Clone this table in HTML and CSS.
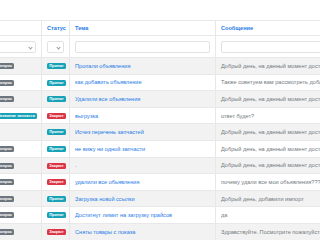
FILE: index.html
```html
<!DOCTYPE html>
<html lang="ru">
<head>
  <meta charset="UTF-8" />
  <title>Обращения</title>
  <link rel="stylesheet" href="styles.css">
</head>
<body>

  <div class="table-wrapper">
    <table class="tickets">
      <colgroup>
        <col class="col-type">
        <col class="col-status">
        <col class="col-subject">
        <col class="col-message">
      </colgroup>
      <thead>
        <tr class="head-row">
          <th></th>
          <th>Статус</th>
          <th>Тема</th>
          <th>Сообщение</th>
        </tr>
        <tr class="filter-row">
          <th><div class="select"></div></th>
          <th><div class="select"></div></th>
          <th><input type="text" /></th>
          <th><input type="text" /></th>
        </tr>
      </thead>
      <tbody>
        <tr>
          <td><span class="badge grey">Вопрос</span></td>
          <td><span class="badge teal">Принят</span></td>
          <td><a href="#">Пропали объявления</a></td>
          <td>Добрый день, на данный момент доступна загрузка</td>
        </tr>
        <tr>
          <td><span class="badge grey">Вопрос</span></td>
          <td><span class="badge teal">Принят</span></td>
          <td><a href="#">как добавить объявление</a></td>
          <td>Также советуем вам рассмотреть добавление</td>
        </tr>
        <tr>
          <td><span class="badge grey">Вопрос</span></td>
          <td><span class="badge teal">Принят</span></td>
          <td><a href="#">Удалили все объявления</a></td>
          <td>Добрый день, на данный момент доступна загрузка</td>
        </tr>
        <tr>
          <td><span class="badge teal">Название запчасти</span></td>
          <td><span class="badge red">Закрыт</span></td>
          <td><a href="#">выгрузка</a></td>
          <td>ответ будет?</td>
        </tr>
        <tr>
          <td></td>
          <td><span class="badge teal">Принят</span></td>
          <td><a href="#">Исчез перечень запчастей</a></td>
          <td>Добрый день, на данный момент доступна загрузка</td>
        </tr>
        <tr>
          <td><span class="badge grey">Вопрос</span></td>
          <td><span class="badge teal">Принят</span></td>
          <td><a href="#">не вижу ни одной запчасти</a></td>
          <td>Добрый день, на данный момент доступна загрузка</td>
        </tr>
        <tr>
          <td><span class="badge grey">Вопрос</span></td>
          <td><span class="badge red">Закрыт</span></td>
          <td><a href="#">.</a></td>
          <td>Добрый день, на данный момент доступна загрузка</td>
        </tr>
        <tr>
          <td><span class="badge grey">Вопрос</span></td>
          <td><span class="badge red">Закрыт</span></td>
          <td><a href="#">удалили все обьявления</a></td>
          <td>почему удали все мои объявления????</td>
        </tr>
        <tr>
          <td><span class="badge grey">Вопрос</span></td>
          <td><span class="badge teal">Принят</span></td>
          <td><a href="#">Загрузка новой ссылки</a></td>
          <td>Добрый день, добавили импорт</td>
        </tr>
        <tr>
          <td><span class="badge grey">Вопрос</span></td>
          <td><span class="badge teal">Принят</span></td>
          <td><a href="#">Достигнут лимит на загрузку прайсов</a></td>
          <td>да</td>
        </tr>
        <tr>
          <td><span class="badge grey">Вопрос</span></td>
          <td><span class="badge red">Закрыт</span></td>
          <td><a href="#">Сняты товары с показа</a></td>
          <td>Здравствуйте. Посмотрите пожалуйста</td>
        </tr>
      </tbody>
    </table>
  </div>

</body>
</html>
```

FILE: styles.css
```css
* {
  box-sizing: border-box;
  margin: 0;
  padding: 0;
  font-family: 'Liberation Sans', Arial, sans-serif;
}

body {
  background: #fff;
  width: 320px;
  height: 240px;
  overflow: hidden;
}

.table-wrapper {
  padding-top: 20px;
  overflow: hidden;
}

.tickets {
  table-layout: fixed;
  width: 420px;
  margin-left: -11px;
  border-collapse: collapse;
  font-size: 5.6px;
  color: #737b82;
}

.col-type { width: 52px; }
.col-status { width: 28px; }
.col-subject { width: 146px; }
.col-message { width: 194px; }

.tickets th,
.tickets td {
  border: 1px solid #e8e8e8;
  padding: 0 5px;
  text-align: left;
  vertical-align: middle;
  white-space: nowrap;
  overflow: hidden;
}

.head-row th {
  height: 15px;
  color: #1f7be8;
  font-weight: bold;
  border-left-color: #eee;
}

.filter-row th {
  height: 22px;
}

.filter-row input,
.filter-row .select {
  display: block;
  width: 100%;
  height: 12px;
  border: 1px solid #e2e2e2;
  border-radius: 2px;
  background: #fff;
}

.filter-row .select {
  position: relative;
}

.filter-row .select::after {
  content: '';
  position: absolute;
  right: 3px;
  top: 4px;
  width: 2px;
  height: 2px;
  border-right: 0.6px solid #999;
  border-bottom: 0.6px solid #999;
  transform: rotate(45deg);
}

.tickets tbody td {
  height: 16.6px;
}

.tickets tbody tr:nth-child(odd) {
  background: #f2f2f2;
}

.tickets a {
  color: #1f7be8;
  text-decoration: none;
}

.badge {
  display: inline-block;
  font-size: 4px;
  line-height: 1;
  font-weight: bold;
  color: #fff;
  padding: 1px 2.2px;
  border-radius: 1.5px;
  vertical-align: middle;
}

.badge.grey { background: #6c757d; }
.badge.teal { background: #17a2b8; }
.badge.red { background: #dc3545; }
```
